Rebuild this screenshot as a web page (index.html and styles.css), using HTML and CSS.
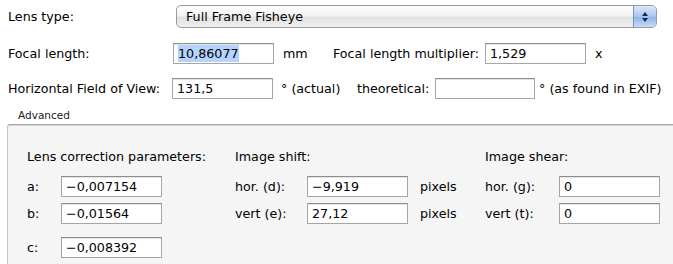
FILE: index.html
```html
<!DOCTYPE html>
<html lang="en">
<head>
    <meta charset="UTF-8">
    <title>Lens parameters</title>
    <link rel="stylesheet" href="styles.css">
</head>
<body>
    <div class="lens-form">
        <div class="row row-type">
            <span class="label w-type">Lens type:</span>
            <div class="popup">
                <span class="popup-text">Full Frame Fisheye</span>
                <span class="stepper">
                    <svg width="8" height="12" viewBox="0 0 8 12">
                        <path d="M4 1 L7 5 L1 5 Z" fill="#1a2a50"/>
                        <path d="M4 11 L7 7 L1 7 Z" fill="#1a2a50"/>
                    </svg>
                </span>
            </div>
        </div>

        <div class="row row-focal">
            <span class="label w-focal">Focal length:</span>
            <div class="field"><span class="selected">10,86077</span></div>
            <span class="unit w-mm">mm</span>
            <span class="label w-mult">Focal length multiplier:</span>
            <div class="field">1,529</div>
            <span class="unit w-x">x</span>
        </div>

        <div class="row row-fov">
            <span class="label w-fov">Horizontal Field of View:</span>
            <div class="field">131,5</div>
            <span class="unit w-actual">° (actual)</span>
            <span class="label w-theo">theoretical:</span>
            <div class="field field-theo"></div>
            <span class="unit w-exif">° (as found in EXIF)</span>
        </div>
    </div>

    <div class="advanced-title">Advanced</div>
    <div class="advanced">
        <div class="adv-grid">
            <div class="heading span-lens">Lens correction parameters:</div>
            <div class="heading span-shift">Image shift:</div>
            <div class="heading span-shear">Image shear:</div>

            <span class="label">a:</span>
            <div class="field">−0,007154</div>
            <span></span>
            <span class="label">hor. (d):</span>
            <div class="field">−9,919</div>
            <span class="unit pixels">pixels</span>
            <span class="label">hor. (g):</span>
            <div class="field">0</div>

            <span class="label">b:</span>
            <div class="field">−0,01564</div>
            <span></span>
            <span class="label">vert (e):</span>
            <div class="field">27,12</div>
            <span class="unit pixels">pixels</span>
            <span class="label">vert (t):</span>
            <div class="field">0</div>

            <span class="label row-c">c:</span>
            <div class="field row-c">−0,008392</div>
        </div>
    </div>
</body>
</html>
```

FILE: styles.css
```css
body {
    margin: 0;
    background: #fff;
    color: #000;
    font-family: "DejaVu Sans", "Liberation Sans", sans-serif;
    font-size: 12.7px;
    overflow: hidden;
}

.lens-form {
    padding: 5px 0 0 8px;
}

.row {
    display: flex;
    align-items: center;
    white-space: nowrap;
}

.row-focal {
    margin-top: 15px;
}

.row-fov {
    margin-top: 14px;
}

.w-type { width: 168px; }
.w-focal { width: 165px; }
.w-mm { width: 59px; padding-left: 9px; box-sizing: border-box; }
.w-mult { width: 152px; }
.w-x { padding-left: 9px; }
.w-fov { width: 164px; }
.w-actual { width: 84px; padding-left: 8px; box-sizing: border-box; }
.w-theo { width: 78px; }
.w-exif { padding-left: 4px; }

.field {
    box-sizing: border-box;
    width: 101px;
    height: 21px;
    padding: 2px 4px 0 4px;
    border: 1px solid #a5a5a5;
    border-top-color: #8e8e8e;
    background: #fff;
    line-height: 16px;
    box-shadow: inset 0 1px 0 #e4e4e4;
}

.field-theo {
    width: 100px;
}

.selected {
    background: #b4d4fe;
    padding: 1px 0;
}

.popup {
    box-sizing: border-box;
    width: 481px;
    height: 23px;
    display: flex;
    align-items: center;
    border: 1px solid #9b9b9b;
    border-radius: 5px;
    background: linear-gradient(#ffffff, #f3f3f3 45%, #e2e2e2 55%, #efefef);
    overflow: hidden;
}

.popup-text {
    flex: 1;
    padding-left: 9px;
}

.stepper {
    width: 22px;
    height: 100%;
    display: flex;
    align-items: center;
    justify-content: center;
    border-left: 1px solid #7b93b8;
    background: linear-gradient(#dbe8fa, #a9c5ee 50%, #8fb2e6 52%, #c6dbf8);
}

.advanced-title {
    margin: 9px 0 0 18px;
    font-size: 10.5px;
    line-height: 14px;
    color: #222;
}

.advanced {
    margin: 2px 0 0 7px;
    height: 141px;
    box-sizing: border-box;
    border: 1px solid #c6c6c6;
    border-top-color: #a4a4a4;
    border-right: none;
    border-bottom: none;
    border-top-left-radius: 3px;
    background: #f5f5f5;
    box-shadow: inset 0 1px 0 #d8d8d8;
}

.adv-grid {
    display: grid;
    grid-template-columns: 34px 100px 74px 72px 101px 77px 74px 99px;
    grid-auto-rows: 21px;
    row-gap: 6px;
    align-items: center;
    padding: 24px 0 0 19px;
    white-space: nowrap;
}

.heading {
    align-self: start;
}

.span-lens { grid-column: 1 / 4; }
.span-shift { grid-column: 4 / 7; }
.span-shear { grid-column: 7 / 9; }

.adv-grid .row-c {
    margin-top: 13px;
}

.pixels {
    padding-left: 12px;
}
```
